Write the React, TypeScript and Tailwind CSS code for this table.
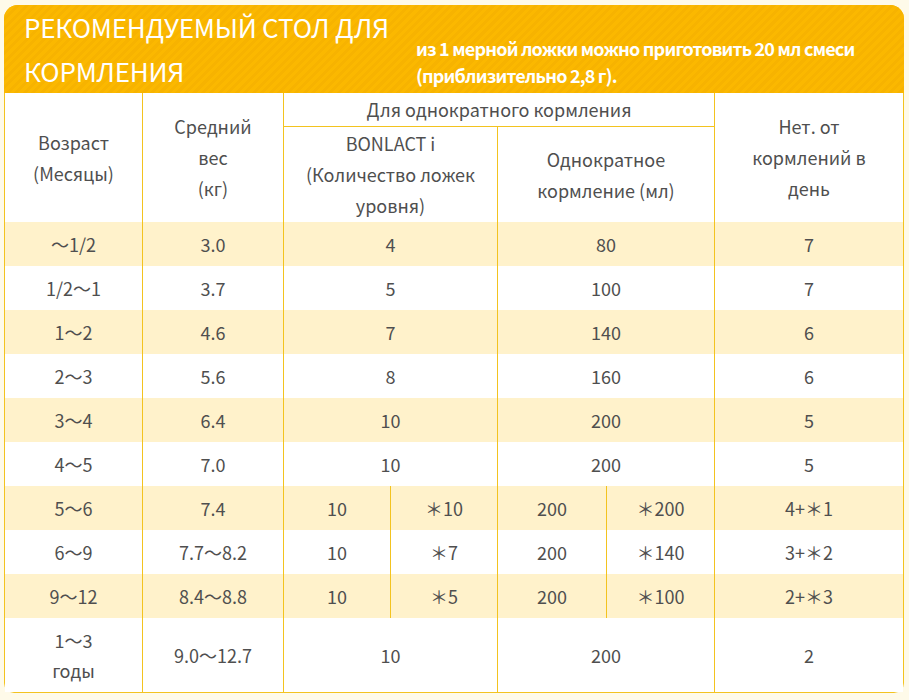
import React from "react";

const GRID = "grid grid-cols-[138px_141px_107px_107px_109px_108px_188px]";
const B = "border-[#f3c31f]";

type Row = {
  age: React.ReactNode;
  w: string;
  a?: string;
  a2?: [string, string];
  b?: string;
  b2?: [string, string];
  n: string;
  tall?: boolean;
};

const rows: Row[] = [
  { age: "～1/2", w: "3.0", a: "4", b: "80", n: "7" },
  { age: "1/2～1", w: "3.7", a: "5", b: "100", n: "7" },
  { age: "1～2", w: "4.6", a: "7", b: "140", n: "6" },
  { age: "2～3", w: "5.6", a: "8", b: "160", n: "6" },
  { age: "3～4", w: "6.4", a: "10", b: "200", n: "5" },
  { age: "4～5", w: "7.0", a: "10", b: "200", n: "5" },
  { age: "5～6", w: "7.4", a2: ["10", "＊10"], b2: ["200", "＊200"], n: "4+＊1" },
  { age: "6～9", w: "7.7～8.2", a2: ["10", "＊7"], b2: ["200", "＊140"], n: "3+＊2" },
  { age: "9～12", w: "8.4～8.8", a2: ["10", "＊5"], b2: ["200", "＊100"], n: "2+＊3" },
  {
    age: (
      <>
        1～3
        <br />
        годы
      </>
    ),
    w: "9.0～12.7",
    a: "10",
    b: "200",
    n: "2",
    tall: true,
  },
];

function Cell({
  children,
  className = "",
  last = false,
}: {
  children: React.ReactNode;
  className?: string;
  last?: boolean;
}) {
  return (
    <div
      className={`flex items-center justify-center text-center ${last ? "" : `border-r ${B}`} ${className}`}
    >
      {children}
    </div>
  );
}

export default function App() {
  return (
    <div className="min-h-[700px] w-[909px] bg-[#fefae9] pl-[4px] pt-[5px] font-['Noto_Sans_CJK_KR','Noto_Sans',sans-serif] text-[#4f4f4f]">
      <div className="w-[900px] overflow-hidden rounded-t-[14px]">
        {/* header band */}
        <div className="flex h-[88px] bg-[#fbb800] bg-[repeating-linear-gradient(135deg,#fbb800_0px,#fbb800_3px,#f7b300_3px,#f7b300_6px)] text-white">
          <div className="w-[412px] shrink-0 pl-[20px] text-[26px] leading-[44px] tracking-[-0.2px]">
            РЕКОМЕНДУЕМЫЙ СТОЛ ДЛЯ
            <br />
            КОРМЛЕНИЯ
          </div>
          <div className="pt-[30px] text-[18px] font-bold leading-[27px] tracking-[-0.8px]">
            из 1 мерной ложки можно приготовить 20 мл смеси
            <br />
            (приблизительно 2,8 г).
          </div>
        </div>

        {/* table */}
        <div className={`rounded-b-[10px] border-x border-b ${B} bg-white`}>
          {/* header rows */}
          <div className={`${GRID} grid-rows-[34px_95px] text-[18px] leading-[31px]`}>
            <Cell className="row-span-2">
              Возраст
              <br />
              (Месяцы)
            </Cell>
            <Cell className="row-span-2">
              Средний
              <br />
              вес
              <br />
              (кг)
            </Cell>
            <Cell className={`col-span-4 border-b ${B}`}>Для однократного кормления</Cell>
            <Cell className="row-span-2" last>
              Нет. от
              <br />
              кормлений в
              <br />
              день
            </Cell>
            <Cell className="col-span-2">
              BONLACT i
              <br />
              (Количество ложек
              <br />
              уровня)
            </Cell>
            <Cell className="col-span-2">
              Однократное
              <br />
              кормление (мл)
            </Cell>
          </div>

          {/* data rows */}
          {rows.map((r, i) => (
            <div
              key={i}
              className={`${GRID} ${r.tall ? "h-[74px]" : "h-[44px]"} ${i % 2 === 0 ? "bg-[#fff2cb]" : "bg-white"} text-[18px] leading-[30px]`}
            >
              <Cell>{r.age}</Cell>
              <Cell>{r.w}</Cell>
              {r.a2 ? (
                <>
                  <Cell>{r.a2[0]}</Cell>
                  <Cell>{r.a2[1]}</Cell>
                </>
              ) : (
                <Cell className="col-span-2">{r.a}</Cell>
              )}
              {r.b2 ? (
                <>
                  <Cell>{r.b2[0]}</Cell>
                  <Cell>{r.b2[1]}</Cell>
                </>
              ) : (
                <Cell className="col-span-2">{r.b}</Cell>
              )}
              <Cell last>{r.n}</Cell>
            </div>
          ))}
        </div>
      </div>
    </div>
  );
}
